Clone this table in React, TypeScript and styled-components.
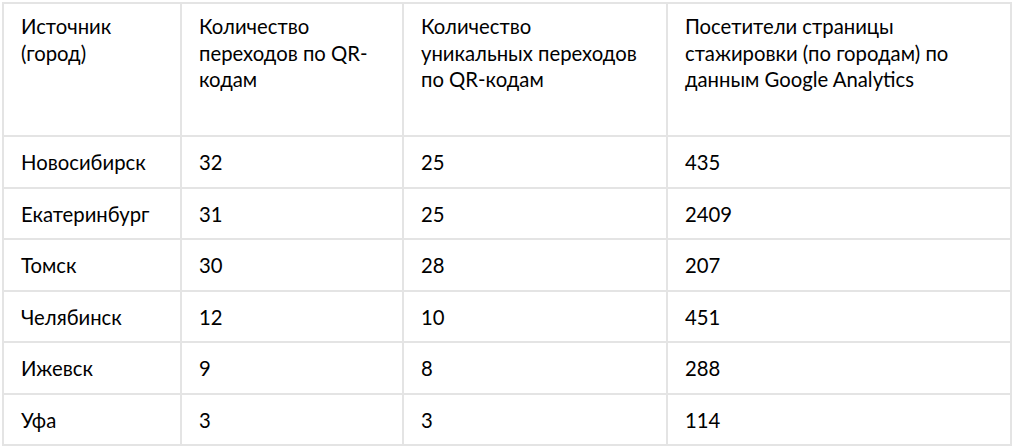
import styled, { createGlobalStyle } from "styled-components";

const GlobalStyle = createGlobalStyle`
  html, body {
    margin: 0;
    padding: 0;
    background: #ffffff;
  }
`;

const Page = styled.div`
  padding: 2px 0 0 2px;
  width: 1012px;
  height: 446px;
  box-sizing: border-box;
  background: #ffffff;
`;

const Table = styled.table`
  border-collapse: collapse;
  table-layout: fixed;
  width: 1008px;
  font-family: Lato, "Open Sans", sans-serif;
  font-size: 20.3px;
  color: #000000;
`;

const Row = styled.tr<{ $head?: boolean }>`
  height: ${(p) => (p.$head ? "133px" : "51.5px")};
`;

const Cell = styled.td<{ $head?: boolean }>`
  border: 2px solid #e4e4e4;
  padding: ${(p) => (p.$head ? "9px 21px 0 17px" : "1px 21px 0 17px")};
  vertical-align: ${(p) => (p.$head ? "top" : "middle")};
  line-height: 26.5px;
`;

const widths = [178, 222, 264, 344];

const head = [
  "Источник (город)",
  "Количество переходов по QR-кодам",
  "Количество уникальных переходов по QR-кодам",
  "Посетители страницы стажировки (по городам) по данным Google Analytics",
];

const rows: [string, number, number, number][] = [
  ["Новосибирск", 32, 25, 435],
  ["Екатеринбург", 31, 25, 2409],
  ["Томск", 30, 28, 207],
  ["Челябинск", 12, 10, 451],
  ["Ижевск", 9, 8, 288],
  ["Уфа", 3, 3, 114],
];

export default function App() {
  return (
    <>
      <GlobalStyle />
      <Page>
        <Table>
          <colgroup>
            {widths.map((w, i) => (
              <col key={i} style={{ width: w }} />
            ))}
          </colgroup>
          <tbody>
            <Row $head>
              {head.map((h) => (
                <Cell $head key={h}>
                  {h}
                </Cell>
              ))}
            </Row>
            {rows.map((r) => (
              <Row key={r[0]}>
                {r.map((v, i) => (
                  <Cell key={i}>{v}</Cell>
                ))}
              </Row>
            ))}
          </tbody>
        </Table>
      </Page>
    </>
  );
}
